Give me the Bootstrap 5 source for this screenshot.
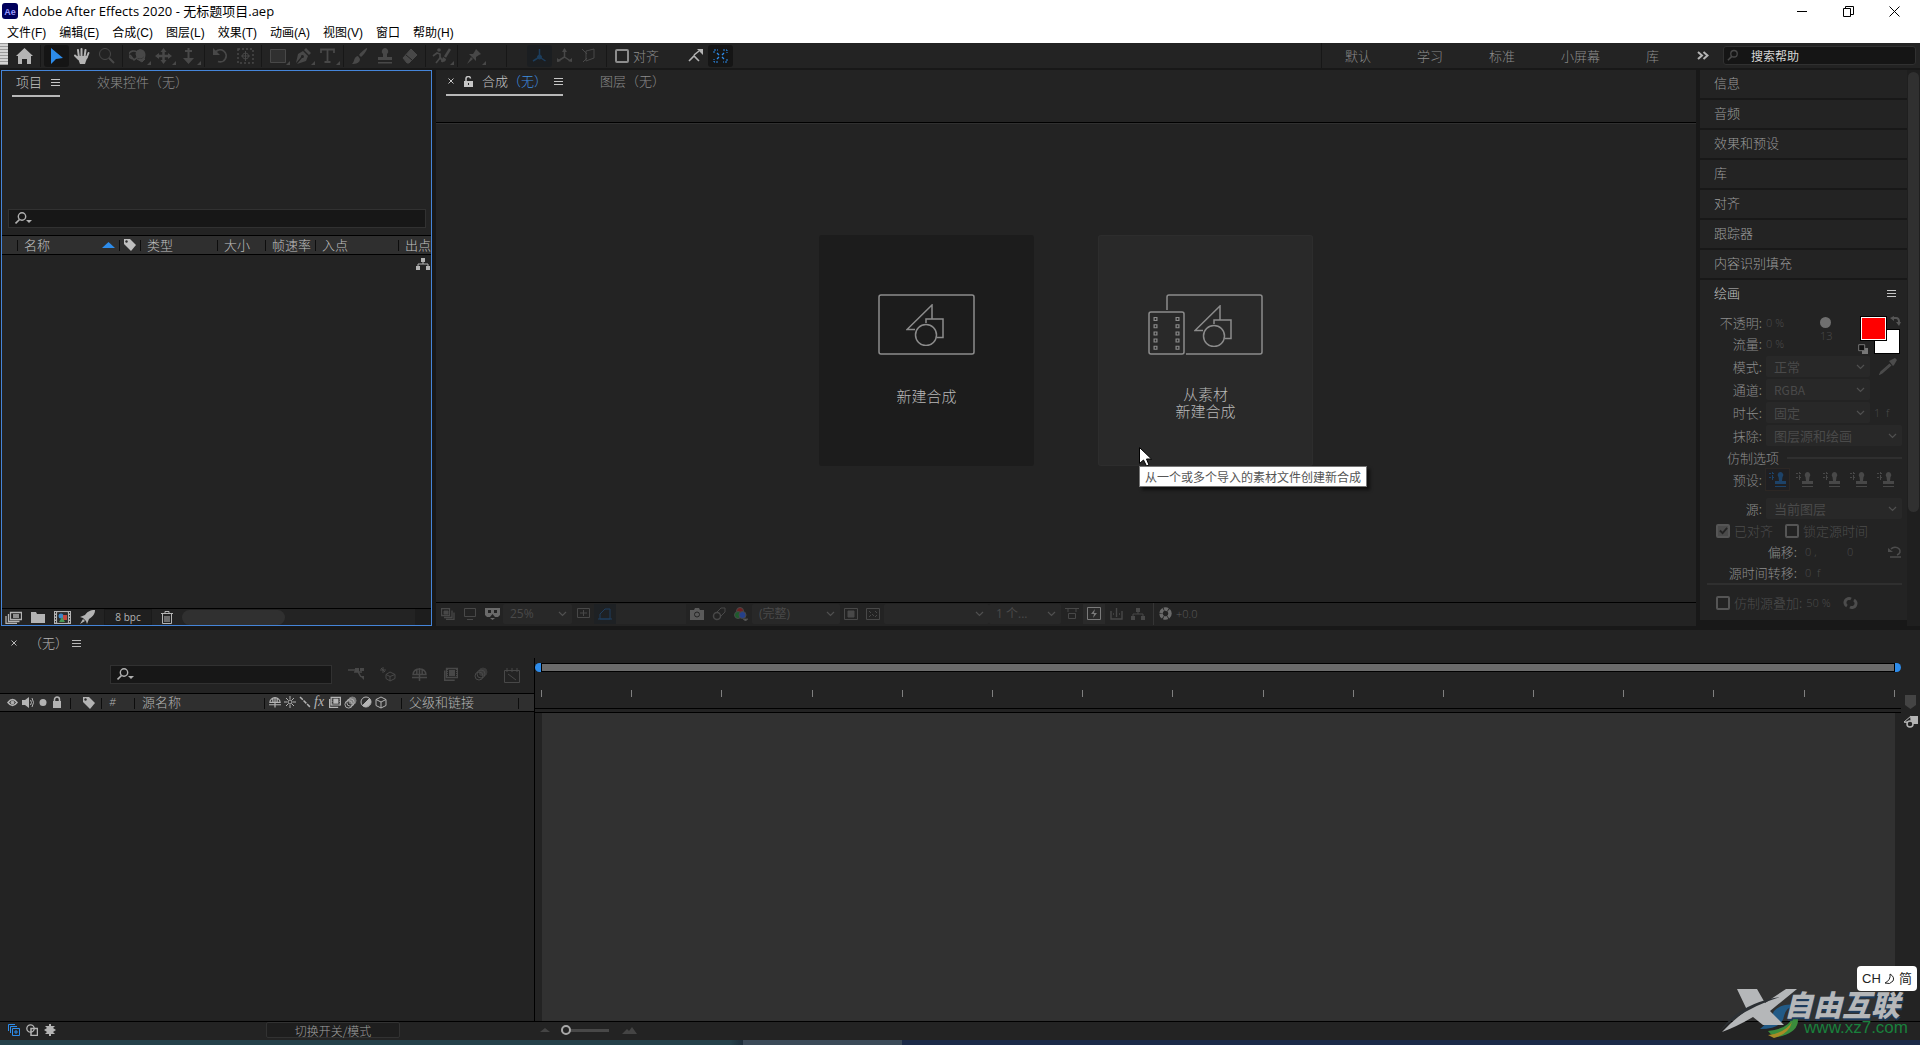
<!DOCTYPE html>
<html lang="zh-CN" data-bs-theme="dark">
<head>
<meta charset="utf-8">
<meta name="viewport" content="width=device-width, initial-scale=1">
<title>Adobe After Effects 2020 - 无标题项目.aep</title>
<link href="https://cdn.jsdelivr.net/npm/bootstrap@5.3.0/dist/css/bootstrap.min.css" rel="stylesheet">
<style>
:root{--pane:#232323;--gap:#181818;--ico:#b4b4b4;--off:#484848;--blue:#2d8ceb}
body{font:13px/20px "Liberation Sans","Noto Sans CJK SC",sans-serif;color:#b0b0b0;background:var(--gap);overflow:hidden;text-spacing-trim:space-all}
button{font:inherit;color:inherit;background:none;border:0;padding:0}
svg{display:block;flex:none;fill:none;stroke:currentColor}
.cjk{font-family:"Noto Sans CJK SC",sans-serif;font-weight:300}
.app{min-height:100vh}
/* window chrome */
.chrome{background:#fff;color:#000;height:43px}
.titlebar{height:22px;font:13px/20px "Open Sans","Noto Sans CJK SC",sans-serif;padding:0 3px 0 2px;gap:5px}
.winbtn{width:46px;height:20px;display:grid;place-items:center}
.menus{font:12px/22px "Liberation Sans","Noto Sans CJK SC",sans-serif;padding-left:7px;gap:13px}
.menus a{color:#000;text-decoration:none}
/* tool bar */
.toolbar{height:25px;background:var(--pane);color:var(--off)}
.grip{width:8px;height:22px;background:repeating-linear-gradient(#9a9a9a 0 1px,#d4d4d4 1px 3px);align-self:flex-start}
.tool{width:25px;height:22px;display:grid;place-items:center;position:relative}
.tool.lit{color:var(--ico)}
.tool.on{color:var(--blue);background:#151515;border-radius:3px}
.tool.faint{color:#1c3d5c;background:#1b1e21}
.tool.sub::after{content:"";position:absolute;right:0;bottom:2px;border:2px solid;border-color:transparent currentColor currentColor transparent}
.vsep{width:1px;height:22px;background:#171717;margin:0 3px}
.vsep.wide{margin:0 20px}
.spaces{gap:46px;padding:0 31px 0 23px;border-left:1px solid #171717}
.helpbox{width:193px;height:19px;background:#151515;border:1px solid #303030;border-radius:3px;padding-left:3px;gap:10px}
.helpbox input,.find input{background:none;border:0;outline:0;color:#d0d0d0;width:100%;min-width:0;padding:0}
.helpbox input::placeholder{color:#d6d6d6;opacity:1}
.helpbox input{font:12px/17px "Noto Sans CJK SC",sans-serif}
/* panes */
.upper{flex:556 1 0;margin-top:2px}
.lower{flex:410 1 0;margin-top:4px;background:var(--pane);min-height:0}
.pane{background:var(--pane)}
.project{width:431px;border:1px solid #4585d9;margin-left:1px}
.tabs{height:26px;padding-left:10px;gap:34px}
.tab{height:26px;line-height:24px;border-bottom:2px solid transparent;display:flex;align-items:center;gap:9px;color:#8d8d8d;padding:0 3px 2px}
.tab.on{border-color:#b8b8b8;color:#c6c6c6;padding:0 0 2px 2px}
.find{background:#171717;border:1px solid #313131;height:19px;padding-left:6px}
.heads{width:100%;table-layout:fixed;border-collapse:collapse;background:#2f2f2f;color:#c0c0c0;border-top:1px solid #000;border-bottom:1px solid #000;font-size:13px}
.heads th{font-weight:300;height:18px;line-height:17px;padding:0 0 1px 7px;white-space:nowrap;overflow:hidden;position:relative}
.heads th+th::before,.vbar::before{content:"";position:absolute;left:0;top:4px;height:11px;width:1px;background:#0d0d0d}
.pfoot{height:17px;color:var(--ico);padding-left:3px;gap:1px;border-top:1px solid #000}
.pfoot .bpc{width:48px;font:10px/14px "Open Sans",sans-serif;background:#1f1f1f;border:1px solid #1a1a1a}
.pill{width:103px;height:15px;border-radius:8px;background:#303030}
.scrolltail{width:16px;height:16px;background:#1d1d1d}
/* viewer */
.viewer{margin-left:4px;min-width:0}
.stage{border-top:1px solid #000;border-bottom:1px solid #000;box-shadow:inset 0 1px #303030;gap:64px;padding-bottom:25px}
.start{width:215px;height:231px;padding-top:59px;border-radius:3px;background:#1c1c1c;color:#b9b9b9;font-size:15px;line-height:17px;position:relative}
.start svg{color:#8c8c8c}
.start.hot{background:#292929;box-shadow:inset 0 0 0 1px #2d2d2d}
.cap{height:34px;margin-top:24px;display:grid;place-items:center}
.hot .cap{margin-top:30px}
.pointer{position:absolute;left:41px;top:212px}
.start .pointer{color:#000}
.tip{position:absolute;left:41px;top:231px;background:#fff;border:1px solid #767676;color:#555;font:12px/19px "Noto Sans CJK SC",sans-serif;padding:0 5px;white-space:nowrap;box-shadow:3px 3px 3px #0009;z-index:3}
.vfoot{height:23px;color:var(--off);padding:0 0 2px 1px}
.vi{width:22px;height:20px;display:grid;place-items:center}
.drop{appearance:none;-webkit-appearance:none;height:21px;border:0;border-radius:2px;color:#4a4a4a;padding:0 20px 0 8px;line-height:20px;font-size:13px;opacity:1;background:#282828 url("data:image/svg+xml,%3Csvg xmlns='http://www.w3.org/2000/svg' width='9' height='6'%3E%3Cpath d='M1 1l3.500 3.500L8 1' fill='none' stroke='%23505050' stroke-width='1.200'/%3E%3C/svg%3E") no-repeat right 5px center}
.vfoot .drop{height:20px;font:12px/20px "Open Sans","Noto Sans CJK SC",sans-serif;padding-left:7px}
/* right column */
.side{width:207px;margin-left:4px}
.fold{height:28px;line-height:26px;padding-left:14px;margin-bottom:2px;color:#9c9c9c;background:var(--pane)}
.painthead{height:26px;padding:0 11px 0 14px;color:#c6c6c6}
.paint{padding:6px 5px 0 7px;color:#8d8d8d}
.line{height:23px;display:flex;align-items:center;gap:4px}
.line.low{height:21px}
.line>label,.line>.lab{width:55px;text-align:right;white-space:nowrap;flex:none}
.line .far{width:90px}
.dim{color:#4c4c4c}
.n{font-family:"Open Sans",sans-serif;font-size:11px}
.tick{appearance:none;-webkit-appearance:none;width:14px;height:14px;border:2px solid #555;border-radius:2px;margin:0;flex:none}
.tick:checked{background:#4a4a4a url("data:image/svg+xml,%3Csvg xmlns='http://www.w3.org/2000/svg' viewBox='0 0 10 10'%3E%3Cpath d='M1 5l3 3 5-6' fill='none' stroke='%23232323' stroke-width='2'/%3E%3C/svg%3E") center/9px no-repeat}
.rule{height:2px;background:#2f2f2f;flex:1}
.stamp{width:23px;height:21px;display:grid;place-items:center;color:#484848}
.stamp.on{background:#1f1f22;outline:1px solid #2c2724;color:#1d4268}
.swatches{position:relative;width:44px;height:43px;margin-left:auto}
.swatches>*{position:absolute}
.fg{left:2px;top:4px;width:27px;height:25px;background:#f00;border:1px solid #000!important;box-shadow:inset 0 0 0 1px #fff;z-index:1}
.bg2{left:16px;top:17px;width:26px;height:25px;background:#fff;border:1px solid #000!important}
.vscroll{width:13px;background:#1f1f1f;padding:2px 1px}
.thumb{height:440px;border-radius:6px;background:#303030}
/* timeline */
.tlleft{width:535px;border-right:1px solid #000}
.tlhead{height:19px;background:#2f2f2f;border-top:1px solid #000;border-bottom:1px solid #000;color:var(--ico)}
.cell{position:relative;height:16px;display:flex;align-items:center;padding-left:8px}
.workrow{padding-top:5px}
.workbar{height:9px;background:#6b6b6b;border:1px solid #000;flex:1}
.knob{width:6px;height:9px;background:var(--blue)}
.ticks{height:12px;margin:18px 6px 6px}
.ticks i{width:1px;height:7px;background:#808080}
.track{background:#313131;margin:0 6px 0 7px}
.tlfoot{height:19px;border-top:1px solid #000;padding:0 0 2px 8px;color:#b4b4b4}
.mode{width:134px;height:16px;line-height:13px;border:1px solid #323232;background:#1e1e1e;color:#a0a0a0;font-size:12px;border-radius:2px}
.zoomer{appearance:none;-webkit-appearance:none;width:48px;height:12px;margin:0 13px 0 11px;background:linear-gradient(#484848,#484848) center/100% 3px no-repeat}
.zoomer::-webkit-slider-thumb{-webkit-appearance:none;width:10px;height:10px;border-radius:50%;border:2px solid #a8a8a8;background:#232323}
.desk{height:5px;background:linear-gradient(90deg,#25414a 0 38%,#1d2c3a 38.700%,#3b4a58 38.700% 47%,#1b2a48 47%)}
.ime{position:absolute;right:3px;bottom:54px;width:60px;height:25px;border-radius:4px;background:#fff;color:#222;font:13px/25px "Liberation Sans","Noto Sans CJK SC",sans-serif;z-index:5;display:flex;justify-content:center;align-items:center;gap:4px}
.wm{position:absolute;right:12px;bottom:6px;width:190px;height:52px;z-index:4}
.wm b{position:absolute;left:66px;top:-1px;font:italic 900 29px/34px "Noto Sans CJK SC",sans-serif;color:#b5b7b9;text-shadow:1px 2px 0 #1d3b5c;white-space:nowrap}
.wm a{position:absolute;right:0;top:32px;font:17px/18px "Liberation Sans",sans-serif;color:#19803c;text-decoration:none}
</style>
<script src="https://cdn.jsdelivr.net/npm/bootstrap@5.3.0/dist/js/bootstrap.bundle.min.js"></script>
</head>
<body>
<svg width="0" height="0" class="position-absolute">
<symbol id="burger" viewBox="0 0 9 9"><path d="M0 1.500h9M0 4.500h9M0 7.500h9"/></symbol>
<symbol id="glass" viewBox="0 0 16 13"><circle cx="8" cy="4.500" r="3.700" stroke-width="1.500"/><path d="M5.500 7.500L1 12" stroke-width="1.800"/></symbol>
<symbol id="glassd" viewBox="0 0 17 13"><circle cx="7" cy="4.500" r="3.700" stroke-width="1.400"/><path d="M4.500 7.500L.5 11.500" stroke-width="1.700"/><path d="M11 8h6l-3 3z" fill="currentColor" stroke="none"/></symbol>
<symbol id="tag" viewBox="0 0 13 13"><path d="M1 1h6l6 6-5 6-7-7z" fill="currentColor" stroke="none"/><circle cx="3.500" cy="3.500" r="1.200" fill="#2f2f2f" stroke="none"/></symbol>
<symbol id="flow" viewBox="0 0 14 14"><path d="M5 1h4v4H5zM0 9h4v4H0zM10 9h4v4h-4z" fill="currentColor" stroke="none"/><path d="M7 4v3M2 9V7h10v2"/></symbol>
<symbol id="stampi" viewBox="0 0 18 17"><path d="M11.500 1a3 3 0 0 1 2 5l-.5 4h4v3H6v-3h4l-.5-4a3 3 0 0 1 2-5z" fill="currentColor" stroke="none"/><path d="M6 15.500h11"/><path d="M0 2.500h6M0 6.500h6M3.500 1v8" stroke-dasharray="2 1"/></symbol>
<symbol id="shapes" viewBox="0 0 38 42"><path d="M9 25.500H1L26 1v14.500M20 19v-4h17v18.500h-6"/><circle cx="20" cy="31" r="10.500"/></symbol>
<symbol id="cube" viewBox="0 0 12 13"><path d="M6 1l5 2.500v6L6 12 1 9.500v-6zM1 3.500l5 2.500 5-2.500M6 6v6"/></symbol>
<symbol id="film" viewBox="0 0 14 14"><path d="M2.500 1.500h11v9h-11zM.7 3.500v9.800h10" stroke-width="1.400"/><path d="M5 3h6v6H5z" fill="currentColor" stroke="none"/><path d="M3.500 2v9M12.500 2v9" stroke-dasharray="1 1"/></symbol>
<symbol id="blur" viewBox="0 0 14 14"><circle cx="9" cy="5" r="4" fill="currentColor" opacity=".6"/><circle cx="7" cy="7" r="4"/><circle cx="5" cy="9" r="4"/></symbol>
<symbol id="shy" viewBox="0 0 14 13"><path d="M1 7a6 5.500 0 0 1 12 0zM7 1v12M4.500 2v5M9.500 2v5M0 9.700h14" stroke-width="1.400"/></symbol>
</svg>

<div class="app d-flex flex-column position-relative">
<header class="chrome">
 <div class="titlebar d-flex align-items-center">
  <svg width="16" height="16" viewBox="0 0 16 16"><rect width="16" height="16" rx="3" fill="#00005b" stroke="none"/><text x="8" y="11.500" font-family="Liberation Sans,sans-serif" font-size="9" font-weight="700" text-anchor="middle" fill="#9999ff" stroke="none">Ae</text></svg>
  <span class="me-auto">Adobe After Effects 2020 - 无标题项目.aep</span>
  <div class="d-flex">
   <button class="winbtn" aria-label="最小化"><svg width="11" height="11"><path d="M0 5.500h10"/></svg></button>
   <button class="winbtn" aria-label="还原"><svg width="11" height="11"><path d="M.5 2.500h7v8h-7zM2.500 2.500v-2h8v8h-3"/></svg></button>
   <button class="winbtn" aria-label="关闭"><svg width="11" height="11"><path d="M.5.500l10 10M10.500.500l-10 10"/></svg></button>
  </div>
 </div>
 <nav class="menus d-flex"><a href="#">文件(F)</a><a href="#">编辑(E)</a><a href="#">合成(C)</a><a href="#">图层(L)</a><a href="#">效果(T)</a><a href="#">动画(A)</a><a href="#">视图(V)</a><a href="#">窗口</a><a href="#">帮助(H)</a></nav>
</header>

<div class="toolbar d-flex align-items-center cjk">
 <div class="grip"></div>
 <button class="tool lit ms-1" aria-label="主页"><svg width="17" height="16" viewBox="0 0 17 16"><path d="M8.500 0L17 8h-2v8h-4v-5H6v5H2V8H0z" fill="currentColor" stroke="none"/></svg></button>
 <div class="vsep"></div>
 <button class="tool on" aria-label="选取"><svg width="13" height="16" viewBox="0 0 13 16"><path d="M1 0l12 10-7 1-5 5z" fill="currentColor" stroke="none"/></svg></button>
 <button class="tool lit" aria-label="手形"><svg width="17" height="16" viewBox="0 0 17 16"><path d="M6 10L5 2M8.500 9V1M11.500 9l1-7M13.500 10l2-5M5.500 11L2 7.500" stroke-width="2" stroke-linecap="round"/><path d="M4 8h11l-2 5-1 3H7z" fill="currentColor" stroke="none"/></svg></button>
 <button class="tool" aria-label="缩放"><svg width="17" height="16" viewBox="0 0 17 16"><circle cx="7" cy="6" r="5.500"/><path d="M11 10l5 5" stroke-width="2"/></svg></button>
 <div class="vsep"></div>
 <button class="tool sub" aria-label="旋转相机"><svg width="19" height="15" viewBox="0 0 19 15"><path d="M5 11a5 4 0 1 1 3-7M1 7l4 5 4-3M12 12a4 5 0 1 0-4-7" stroke-width="1.600"/><circle cx="11" cy="6" r="4" fill="currentColor"/><path d="M8 11h8l-3 3z" fill="currentColor"/></svg></button>
 <button class="tool sub" aria-label="平移相机"><svg width="17" height="16" viewBox="0 0 17 16"><path d="M8.500 2v12M2 8h13" stroke-width="2.500"/><path d="M8.500 0l3 4h-6zM8.500 16l3-4h-6zM0 8l4-3v6zM17 8l-4-3v6z" fill="currentColor" stroke="none"/></svg></button>
 <button class="tool sub" aria-label="推拉相机"><svg width="13" height="16" viewBox="0 0 13 16"><path d="M6.500 0v13" stroke-width="2"/><path d="M1 10h11l-5.500 6zM3 2h7v2H3z" fill="currentColor" stroke="none"/></svg></button>
 <div class="vsep"></div>
 <button class="tool" aria-label="旋转"><svg width="16" height="15" viewBox="0 0 16 15"><path d="M3 3.500a6 6 0 1 1 2 10" stroke-width="1.800"/><path d="M0 0v7h7z" fill="currentColor" stroke="none"/></svg></button>
 <button class="tool" aria-label="锚点"><svg width="17" height="16" viewBox="0 0 17 16"><path d="M1 1h15v14H1z" stroke-dasharray="2 2" stroke-width="1.500"/><circle cx="8.500" cy="8" r="3"/><path d="M8.500 3v10M4 8h9"/></svg></button>
 <div class="vsep"></div>
 <button class="tool sub" aria-label="矩形"><svg width="16" height="14"><path d="M.5.500h15v13H.5z" fill="#303030"/></svg></button>
 <button class="tool sub" aria-label="钢笔"><svg width="16" height="16" viewBox="0 0 16 16"><path d="M11 0l5 5-2 2-5-5zM8 3l5 5-2 5-9 3 5-6a1.500 1.500 0 1 0-1-1l-5 6 2-9z" fill="currentColor" stroke="none"/></svg></button>
 <button class="tool sub" aria-label="文字"><svg width="15" height="15" viewBox="0 0 15 15"><path d="M1 5V1.500h13V5M7.500 1v12.500M4.500 14h6" stroke-width="1.800"/></svg></button>
 <div class="vsep"></div>
 <button class="tool" aria-label="画笔"><svg width="16" height="16" viewBox="0 0 16 16"><path d="M15 0c1 1-4 8-6 9L7 7c1-2 7-7 8-7zM6 8l2 3c0 4-4 5-8 5 3-2 1-7 6-8z" fill="currentColor" stroke="none"/></svg></button>
 <button class="tool" aria-label="仿制图章"><svg width="16" height="16" viewBox="0 0 16 16"><path d="M8 0a4 3.500 0 0 1 2 6v3h5v3H1V9h5V6a4 3.500 0 0 1 2-6zM1 14h14v1.500H1z" fill="currentColor" stroke="none"/></svg></button>
 <button class="tool" aria-label="橡皮擦"><svg width="16" height="16" viewBox="0 0 16 16"><path d="M9 1l6 6-8 8H5l-4-5z" fill="currentColor"/><path d="M4 7l6 5" stroke="#232323"/></svg></button>
 <div class="vsep"></div>
 <button class="tool sub" aria-label="Roto"><svg width="19" height="16" viewBox="0 0 19 16"><circle cx="7" cy="2" r="1.800" fill="currentColor" stroke="none"/><path d="M1 8l4-3 3 1v4l-4 5M8 9l3 5" stroke-width="1.700"/><path d="M18 1l-5 8" stroke-width="2.500"/><path d="M11 9l3 2c0 3-3 3-5 3z" fill="currentColor" stroke="none"/></svg></button>
 <div class="vsep"></div>
 <button class="tool sub" aria-label="人偶"><svg width="16" height="16" viewBox="0 0 16 16"><path d="M10 1l5 5-2 1-3 2v4L3 6h4l2-3zM5 9l2 2-6 5z" fill="currentColor" stroke="none"/></svg></button>
 <div class="vsep wide"></div>
 <button class="tool on faint" aria-label="本地轴"><svg width="15" height="15" viewBox="0 0 15 15"><path d="M7.500 9V1M7.500 9L1 13M7.500 9l6 4" stroke-width="1.500"/><circle cx="7.500" cy="9" r="2" fill="currentColor"/></svg></button>
 <button class="tool" aria-label="世界轴"><svg width="15" height="15" viewBox="0 0 15 15"><path d="M7.500 9V1M7.500 9L1 13M7.500 9l6 4" stroke-width="1.500"/><path d="M5 4l2.500-4L10 4zM0 14v-4l4 3zM15 14v-4l-4 3z" fill="currentColor" stroke="none"/></svg></button>
 <button class="tool" aria-label="视图轴"><svg width="15" height="15" viewBox="0 0 15 15"><path d="M4 3l8-2v9l-8 3zM0 1l5 5M1 14l4-4"/></svg></button>
 <div class="vsep ms-1 me-2"></div>
 <label class="d-flex align-items-center gap-1" style="color:#8d8d8d"><input type="checkbox" class="tick" style="border-color:#8d8d8d">对齐</label>
 <button class="tool lit ms-4" aria-label="吸附边缘"><svg width="15" height="14" viewBox="0 0 15 14"><path d="M1 12l5-5 5 5M6 6l5-4" stroke-width="1.600"/><path d="M9 0h6v6z" fill="currentColor" stroke="none"/></svg></button>
 <button class="tool on" aria-label="吸附特征"><svg width="15" height="14" viewBox="0 0 15 14"><path d="M1 4V1h4M10 1h4v3M14 10v3h-4M5 13H1v-3" stroke-dasharray="2 1"/><path d="M4 4l2 2M11 4L9 6M4 10l2-2M11 10L9 8" stroke-width="1.300"/></svg></button>
 <nav class="spaces d-flex align-items-center ms-auto h-100 text-nowrap" style="color:#8d8d8d"><span>默认</span><span>学习</span><span>标准</span><span>小屏幕</span><span>库</span></nav>
 <button class="tool lit" aria-label="更多"><svg width="12" height="9" viewBox="0 0 12 9"><path d="M1 1l4 3.500L1 8M6.500 1l4 3.500-4 3.500" stroke-width="2"/></svg></button>
 <div class="helpbox d-flex align-items-center ms-2 me-1"><svg width="14" height="13"><use href="#glass"/></svg><input placeholder="搜索帮助" aria-label="搜索帮助"></div>
</div>

<main class="upper d-flex cjk">
 <section class="pane project d-flex flex-column">
  <div class="tabs d-flex"><div class="tab on ps-1">项目<svg width="9" height="9"><use href="#burger"/></svg></div><div class="tab">效果控件（无）</div></div>
  <div class="find d-flex align-items-center" style="margin:112px 5px 7px 6px"><svg width="17" height="13"><use href="#glassd"/></svg><input aria-label="搜索项目"></div>
  <table class="heads"><colgroup><col style="width:15px"><col style="width:102px"><col style="width:21px"><col style="width:77px"><col style="width:48px"><col style="width:50px"><col style="width:83px"><col></colgroup>
  <tr><th></th><th><div class="d-flex align-items-center justify-content-between pe-1">名称<svg width="13" height="6" style="color:#2d8ceb"><path d="M0 6l6.500-6L13 6z" fill="currentColor" stroke="none"/></svg></div></th><th class="ps-1"><svg width="13" height="13"><use href="#tag"/></svg></th><th>类型</th><th>大小</th><th>帧速率</th><th>入点</th><th>出点</th></tr></table>
  <div class="flex-fill d-flex justify-content-end" style="padding:2px 1px"><svg width="14" height="14" style="color:#b4b4b4"><use href="#flow"/></svg></div>
  <div class="pfoot d-flex align-items-center">
   <svg width="17" height="13" viewBox="0 0 17 13"><path d="M5.500 1.500h11v7h-11zM3.500 3v7.500h11M1 5v7.500h11M8 4h6M8 6h6" stroke-width="1.300"/></svg>
   <svg width="14" height="12" class="ms-2" viewBox="0 0 14 12"><path d="M0 1h5l1 2h8v9H0z" fill="currentColor" stroke="none"/></svg>
   <svg width="17" height="13" class="ms-2" viewBox="0 0 17 13"><path d="M0 0h17v13H0z" fill="currentColor" stroke="none"/><path d="M3.500 1.500h10v10h-10z" fill="#2a2a2a" stroke="#333"/><path d="M1.500 1v12M15.500 1v12" stroke="#222" stroke-dasharray="1.500 1.500"/><circle cx="7" cy="5" r="2.500" fill="#3d86c9" stroke="none"/><path d="M9 4h4v5H9z" fill="#c4473d" stroke="none"/><path d="M5 11l3-5 3 5z" fill="#4b9b56" stroke="none"/></svg>
   <svg width="15" height="14" class="ms-2" viewBox="0 0 15 14"><path d="M15 0c-5 0-8 2-10 5L0 7l3 1 3 3 1 3 2-5c4-3 6-5 6-9zM3 9l-3 5 5-3z" fill="currentColor" stroke="none"/></svg>
   <button class="bpc ms-2 text-center">8 bpc</button>
   <svg width="12" height="13" class="mx-2" viewBox="0 0 12 13"><path d="M0 2.500h12M4 2V.5h4V2M1.500 3v9.500h9V3M4 5v6M6 5v6M8 5v6"/></svg>
   <div class="pill"></div><div class="scrolltail ms-auto"></div>
  </div>
 </section>

 <section class="pane viewer flex-fill d-flex flex-column">
  <div class="tabs d-flex" style="height:52px"><div class="tab on"><svg width="6" height="6" viewBox="0 0 6 6"><path d="M.5.500l5 5M5.500.500l-5 5"/></svg><svg width="10" height="11" viewBox="0 0 10 11"><path d="M3 5V3a2.200 2.200 0 0 1 4.500-.5" stroke-width="1.500"/><path d="M1 5h9v6H1z" fill="currentColor" stroke="none"/><path d="M5.500 7v2" stroke="#232323"/></svg><span>合成<span style="color:#3f8fe0">（无）</span></span><svg width="9" height="9" style="margin-left:-2px"><use href="#burger"/></svg></div><div class="tab">图层（无）</div></div>
  <div class="stage flex-fill d-flex justify-content-center align-items-center">
   <div class="start d-flex flex-column align-items-center" role="button"><svg width="97" height="61" viewBox="0 0 97 61" stroke-width="1.500"><rect x="1" y="1" width="95" height="59" rx="2"/><use href="#shapes" x="28" y="10" width="38" height="42"/></svg><div class="cap text-center">新建合成</div></div>
   <div class="start hot d-flex flex-column align-items-center" role="button"><svg width="115" height="61" viewBox="0 0 115 61" stroke-width="1.500"><path d="M19 16V3q0-2 2-2h91q2 0 2 2v55q0 2-2 2H38"/><rect x="1" y="18" width="35" height="42" rx="2"/><path d="M7.500 23v34M29.500 23v34" stroke-width="4" stroke-dasharray="4 3.200"/><path d="M7.500 24v34M29.500 24v34" stroke="#292929" stroke-width="1.600" stroke-dasharray="2 5.200"/><use href="#shapes" x="46" y="11" width="38" height="42"/></svg><div class="cap text-center">从素材<br>新建合成</div>
    <svg class="pointer" width="13" height="20" viewBox="0 0 13 20"><path d="M.5.500v16l4-3.500 3 6 2.500-1-2.500-6h5z" fill="#fff"/></svg>
    <div class="tip">从一个或多个导入的素材文件创建新合成</div></div>
  </div>
  <div class="vfoot d-flex align-items-center">
   <span class="vi"><svg width="14" height="12" viewBox="0 0 14 12"><path d="M.5.500h8v7h-8zM3 9.500h8v-7M5 11.500h8v-7" stroke-width="1.300"/><path d="M3 3h4v3H3z" fill="currentColor"/></svg></span>
   <span class="vi"><svg width="12" height="12" viewBox="0 0 12 12"><path d="M.5.500h11v8H.5zM3 11.500h6"/></svg></span>
   <span class="vi"><svg width="15" height="13" viewBox="0 0 15 13"><path d="M0 1h15v7l-2 2h-3L7.500 7 5 10H2L0 8zM5 11h5l-2.500 2z" fill="#6a6a6a" stroke="none"/><path d="M3 3h3v3H3zM9 3h3v3H9z" fill="#232323" stroke="none"/></svg></span>
   <select class="drop" style="width:69px" aria-label="放大率" disabled><option>25%</option></select>
   <span class="vi"><svg width="13" height="12" viewBox="0 0 13 12"><path d="M.5.500h12v9H.5zM6.500 2v6M3 5h7"/></svg></span>
   <span class="vi" style="color:#1f3e5e;background:#1e2124"><svg width="14" height="13" viewBox="0 0 14 13"><path d="M2 12V7l5-5h5v10zM0 12h14"/></svg></span>
   <span style="width:70px;height:20px;background:#272727"></span>
   <span class="vi"><svg width="14" height="12" viewBox="0 0 14 12"><path d="M0 2h4l1-2h4l1 2h4v10H0z" fill="#5a5a5a" stroke="none"/><circle cx="7" cy="6.500" r="2.500" stroke="#232323"/></svg></span>
   <span class="vi"><svg width="14" height="14" viewBox="0 0 14 14"><circle cx="5" cy="9" r="3.500" stroke-width="1.500"/><path d="M5 5l4-4h4v4L9 9"/></svg></span>
   <span class="vi"><svg width="14" height="14" viewBox="0 0 14 14" stroke="none"><circle cx="6" cy="4" r="3.500" fill="#6f2020"/><circle cx="4" cy="8" r="3.500" fill="#1e5a2c"/><circle cx="8.500" cy="8" r="3.500" fill="#25408a"/><path d="M9 12h5l-2.500 2z" fill="#666"/></svg></span>
   <select class="drop" style="width:88px" aria-label="分辨率" disabled><option>(完整)</option></select>
   <span class="vi"><svg width="14" height="12"><path d="M.5.500h13v11H.5z"/><path d="M4 3h6v6H4z" fill="currentColor"/></svg></span>
   <span class="vi"><svg width="14" height="12"><path d="M.5.500h13v11H.5zM3 3l2 2M9 3l2 2M6 6l2 2M3 9l2-2M9 9l2-2"/></svg></span>
   <select class="drop" style="width:105px" aria-label="视图" disabled><option></option></select>
   <select class="drop" style="width:72px" aria-label="视图布局" disabled><option>1 个...</option></select>
   <span class="vi"><svg width="14" height="13"><path d="M0 1.500h14M3 1v4M11 1v4M3.500 6.500h7v5h-7z"/></svg></span>
   <span class="vi" style="color:#7a7a7a;background:#2a2a2a"><svg width="14" height="13"><path d="M.5.500h13v12H.5z"/><path d="M8 2L4 7h3l-1 4 4-5H7z" fill="currentColor" stroke="none"/></svg></span>
   <span class="vi"><svg width="13" height="12"><path d="M1 3v8h11V3M6.500 0v9M3 6h1M9 6h1" stroke-width="1.400"/></svg></span>
   <span class="vi"><svg width="14" height="14"><use href="#flow"/></svg></span>
   <div class="vsep mx-0 ms-1" style="background:#353535"></div>
   <span class="vi" style="color:#6a6a6a"><svg width="13" height="13" viewBox="0 0 13 13"><circle cx="6.500" cy="6.500" r="4.500" stroke-width="3.500" stroke-dasharray="4 .8"/></svg></span><span class="n" style="color:#5c5c5c">+0.0</span>
  </div>
 </section>

 <aside class="side">
  <div class="fold">信息</div><div class="fold">音频</div><div class="fold">效果和预设</div><div class="fold">库</div><div class="fold">对齐</div><div class="fold">跟踪器</div><div class="fold">内容识别填充</div>
  <div class="pane" style="height:340px">
   <div class="painthead d-flex align-items-center justify-content-between">绘画<svg width="9" height="9"><use href="#burger"/></svg></div>
   <div class="paint">
    <div class="d-flex" style="height:43px"><div><div class="line low"><span class="lab">不透明:</span><span class="dim n">0 %</span></div><div class="line low"><span class="lab">流量:</span><span class="dim n">0 %</span></div></div>
     <div class="text-center dim n" style="margin-left:36px;padding-top:5px;line-height:16px"><svg width="11" height="11" style="color:#6f6f6f"><circle cx="5.500" cy="5.500" r="5.500" fill="currentColor" stroke="none"/></svg>13</div>
     <div class="swatches"><button class="fg" aria-label="前景颜色"></button><button class="bg2" aria-label="背景颜色"></button>
      <svg width="11" height="10" viewBox="0 0 11 10" style="left:32px;top:4px;color:#555"><path d="M3 2h3q3 0 3 4" stroke-width="2"/><path d="M0 2l4-2v5zM6 6h5l-2 4z" fill="currentColor" stroke="none"/></svg>
      <svg width="10" height="10" viewBox="0 0 10 10" style="left:0;top:32px;color:#777"><path d="M4 4h6v6H4z" fill="currentColor" stroke="none"/><path d="M.7.700h6v6h-6z" fill="#111"/></svg></div></div>
    <div class="line"><label for="md">模式:</label><select id="md" class="drop" style="width:104px" disabled><option>正常</option></select><svg width="18" height="17" viewBox="0 0 18 17" class="mx-auto dim"><path d="M11 6l-9 8-1 2 2-1 9-8" stroke-width="1.400"/><path d="M10 3l4 5 1-1 3-5-2-2-4 2z" fill="currentColor" stroke="none"/></svg></div>
    <div class="line"><label for="ch">通道:</label><select id="ch" class="drop" style="width:104px;font-size:12px" disabled><option>RGBA</option></select></div>
    <div class="line"><label for="du">时长:</label><select id="du" class="drop" style="width:104px" disabled><option>固定</option></select><span class="dim n">1 &nbsp;f</span></div>
    <div class="line"><label for="er">抹除:</label><select id="er" class="drop flex-fill" disabled><option>图层源和绘画</option></select></div>
    <div class="line low" style="padding-left:20px"><span>仿制选项</span><span class="rule ms-1"></span></div>
    <div class="line"><span class="lab">预设:</span><button class="stamp on" aria-label="预设 1"><svg width="18" height="17"><use href="#stampi"/></svg></button><button class="stamp" aria-label="预设 2"><svg width="18" height="17"><use href="#stampi"/></svg></button><button class="stamp" aria-label="预设 3"><svg width="18" height="17"><use href="#stampi"/></svg></button><button class="stamp" aria-label="预设 4"><svg width="18" height="17"><use href="#stampi"/></svg></button><button class="stamp" aria-label="预设 5"><svg width="18" height="17"><use href="#stampi"/></svg></button></div>
    <div class="line" style="margin-top:6px"><label for="so">源:</label><select id="so" class="drop flex-fill" disabled><option>当前图层</option></select></div>
    <div class="line low dim" style="padding-left:9px"><input type="checkbox" class="tick" id="al" checked disabled><label for="al" class="w-auto">已对齐</label><input type="checkbox" class="tick ms-2" id="lk" disabled><label for="lk" class="w-auto">锁定源时间</label></div>
    <div class="line low"><span class="lab far">偏移:</span><span class="dim n ms-1" style="width:38px">0 ,</span><span class="dim n">0</span><svg width="14" height="13" viewBox="0 0 14 13" class="ms-auto dim"><path d="M3 4a5 4 0 1 1 6 6M2 12h11" stroke-width="1.600"/><path d="M0 3l5 4H0z" fill="currentColor" stroke="none"/></svg></div>
    <div class="line low"><span class="lab far">源时间转移:</span><span class="dim n ms-1">0 &nbsp;f</span></div>
    <div class="rule"></div>
    <div class="line dim" style="margin-top:6px;padding-left:9px"><input type="checkbox" class="tick" id="ov" disabled><label for="ov" class="w-auto">仿制源叠加:</label><span class="n">50 %</span><svg width="15" height="14" viewBox="0 0 15 14" class="ms-2"><path d="M8 3a4 4 0 1 0-4 7M7 11a4 4 0 1 0 4-7" stroke-width="3"/></svg></div>
   </div>
  </div>
 </aside>
 <div class="vscroll"><div class="thumb"></div></div>
</main>

<section class="lower d-flex flex-column cjk">
 <div class="d-flex align-items-center" style="height:28px;padding:0 0 2px 11px;gap:12px;color:#b8b8b8"><svg width="6" height="6" viewBox="0 0 6 6"><path d="M.5.500l5 5M5.500.500l-5 5"/></svg><span>（无）</span><svg width="9" height="9" style="margin-left:-8px"><use href="#burger"/></svg></div>
 <div class="flex-fill d-flex">
  <div class="tlleft d-flex flex-column">
   <div class="d-flex align-items-center" style="height:35px;padding:0 14px 2px 110px;color:#484848">
    <div class="find d-flex align-items-center me-3" style="width:222px;color:#b0b0b0"><svg width="17" height="13"><use href="#glassd"/></svg><input aria-label="搜索图层"></div>
    <div class="flex-fill d-flex justify-content-between"><svg width="16" height="14" viewBox="0 0 16 14"><path d="M0 3h9M9 3l4 7M6 5h8" stroke-width="1.500"/><path d="M7 1h4v4H7zM12 1h4v3h-4zM12 9h4v4z" fill="currentColor" stroke="none"/></svg><svg width="16" height="15" viewBox="0 0 16 15"><path d="M3 0v6M0 3h6M1 1l4 4M10 5l5 2.500v4L10 14l-4-2.500v-4zM6 7.500l4 2 5-2M10 9.500V14"/></svg><svg width="15" height="14"><use href="#shy"/></svg><svg width="14" height="14"><use href="#film"/></svg><svg width="14" height="14"><use href="#blur"/></svg><svg width="16" height="16" viewBox="0 0 16 16"><path d="M.5 3.500h15v12H.5zM3 1v4M8 1v4M13 1v4M4 7l8 6"/></svg></div>
   </div>
   <div class="tlhead d-flex">
    <div class="cell" style="width:70px;gap:4px;padding-left:7px"><svg width="11" height="9" viewBox="0 0 11 9"><path d="M1 4.500q4.500-6 9 0-4.500 6-9 0z" stroke-width="1.500"/><circle cx="5.500" cy="4.500" r="1.500" fill="currentColor"/></svg><svg width="12" height="11" viewBox="0 0 12 11"><path d="M0 3h3l4-3v11L3 8H0z" fill="currentColor" stroke="none"/><path d="M8.500 3q2 2.500 0 5M10 1q3 4.500 0 9"/></svg><svg width="10" height="9"><circle cx="5" cy="4.500" r="3.500" fill="currentColor" stroke="none"/></svg><svg width="10" height="12" viewBox="0 0 10 12"><path d="M2.500 6V3.500a2.500 2.500 0 0 1 5 0V6" stroke-width="1.500"/><path d="M1 5h8v7H1z" fill="currentColor" stroke="none"/></svg></div>
    <div class="cell vbar" style="width:31px;padding-left:12px"><svg width="13" height="13"><use href="#tag"/></svg></div>
    <div class="cell vbar" style="width:33px"><i class="n">#</i></div>
    <div class="cell vbar" style="width:130px">源名称</div>
    <div class="cell vbar" style="width:137px;padding-left:5px;gap:3px"><svg width="12" height="12"><use href="#shy"/></svg><svg width="12" height="12" viewBox="0 0 12 12"><circle cx="6" cy="6" r="2"/><path d="M6 0v3M6 9v3M0 6h3M9 6h3M2 2l2 2M8 8l2 2M10 2L8 4M4 8l-2 2"/></svg><svg width="12" height="12"><path d="M1 1l10 10" stroke-width="1.500" stroke-dasharray="4 1"/></svg><i style="font:italic 14px/16px 'Liberation Serif',serif;width:12px">fx</i><svg width="12" height="12"><use href="#film"/></svg><svg width="13" height="13"><use href="#blur"/></svg><svg width="12" height="12" viewBox="0 0 12 12"><circle cx="6" cy="6" r="5"/><path d="M9.500 2.500a5 5 0 0 1-7 7z" fill="currentColor"/></svg><svg width="12" height="13"><use href="#cube"/></svg></div>
    <div class="cell vbar" style="width:117px">父级和链接</div><div class="cell vbar"></div>
   </div>
  </div>
  <div class="flex-fill d-flex flex-column">
   <div class="workrow d-flex"><div class="knob rounded-start-pill"></div><div class="workbar"></div><div class="knob rounded-end-pill"></div></div>
   <div class="ticks d-flex justify-content-between"><i></i><i></i><i></i><i></i><i></i><i></i><i></i><i></i><i></i><i></i><i></i><i></i><i></i><i></i><i></i><i></i></div>
   <div style="height:5px;border:solid #000;border-width:1px 0"></div>
   <div class="track flex-fill"></div>
  </div>
  <div class="d-flex flex-column align-items-center" style="width:19px;padding-top:37px;gap:6px">
   <svg width="11" height="14" style="color:#444"><path d="M0 0h11v10l-5.500 4L0 10z" fill="currentColor" stroke="none"/></svg>
   <svg width="15" height="13" viewBox="0 0 15 13" style="color:#b4b4b4"><path d="M7 1h8v8H9z" fill="currentColor" stroke="none"/><path d="M1 7l7-6v7zM1 7h5"/><circle cx="7" cy="9" r="3" fill="#232323" stroke-width="1.500"/></svg>
  </div>
 </div>
 <div class="tlfoot d-flex align-items-center">
  <div class="d-flex" style="gap:6px;width:258px"><svg width="12" height="12" style="color:#2d8ceb"><path d="M4.500 4.500h7v7h-7zM2.500 9V2.500H9M.5 7V.5H7M8 6v4M6 8h4"/></svg><svg width="12" height="12"><circle cx="4.500" cy="4.500" r="3.700" stroke-width="1.300"/><path d="M5 4.500h6.500v7H5z" stroke-width="1.500"/></svg><svg width="12" height="12" viewBox="0 0 12 12"><path d="M1 2h4v8H1l2-2-3-2 3-2zM11 2H7v8h4l-2-2 3-2-3-2zM5 0h2v12H5z" fill="currentColor" stroke="none"/></svg></div>
  <button class="mode">切换开关/模式</button>
  <svg width="10" height="4" style="margin-left:140px;color:#444"><path d="M0 4l5-4 5 4z" fill="currentColor" stroke="none"/></svg><input type="range" class="zoomer" value="0" aria-label="时间轴缩放"><svg width="15" height="7" style="color:#444"><path d="M0 7l5-5 2 2 3-4 5 7z" fill="currentColor" stroke="none"/></svg>
 </div>
</section>
<div class="desk"></div>

<div class="wm"><svg width="190" height="52" viewBox="0 0 190 52"><path d="M42 42q22 0 24-13 2-9 12-11-14-2-22 6-4 10-14 18z" fill="#225a86" stroke="none"/><path d="M50 44q28-3 26-24 12 22-12 29-8 3-14-5z" fill="#3b8d3c" stroke="none"/><path d="M50 48q17-2 24-13-3 12-18 16z" fill="#a98a26" stroke="none"/><path d="M19 2h20l8 14L68 2h11L52 24l14 14H45L35 30Q18 40 4 45q10-11 25-22z" fill="#b5b7b9" stroke="none"/><path d="M2 44q20-28 60-34Q24 22 2 44z" fill="#2c3034" stroke="none"/></svg><b>自由互联</b><a href="#">www.xz7.com</a></div>
<div class="ime">CH <svg width="10" height="12" viewBox="0 0 10 12"><path d="M5 1q5 3 3 7-3 4-8 2 6-3 5-9z"/></svg> 简</div>
</div>
</body>
</html>
